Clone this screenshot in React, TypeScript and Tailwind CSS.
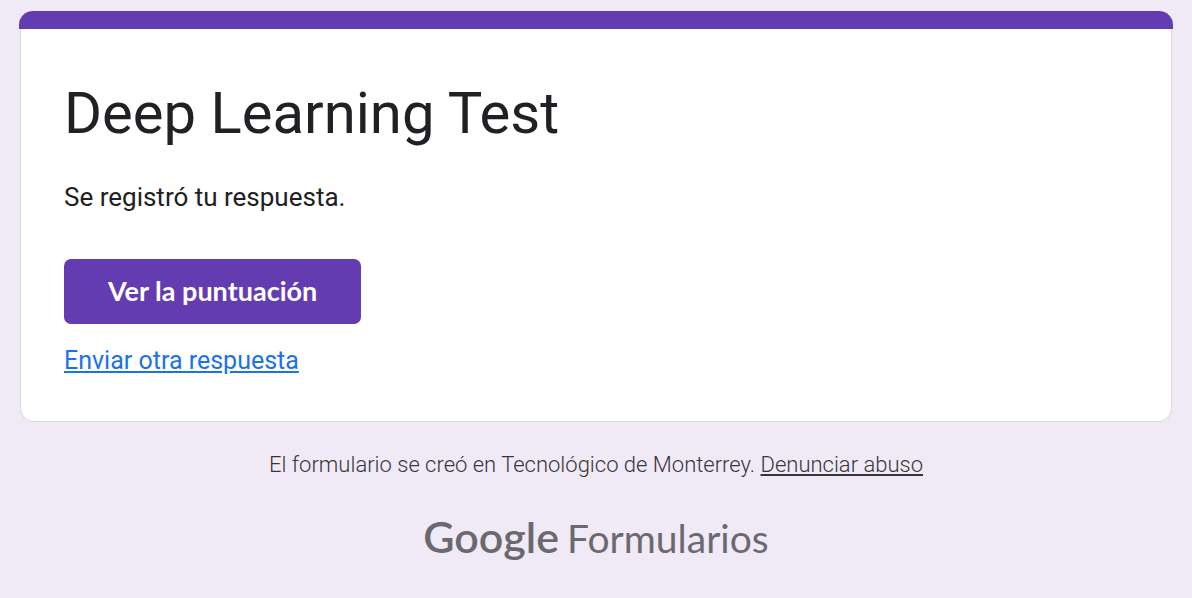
export default function App() {
  return (
    <div className="min-h-screen bg-[#f0eaf6] px-5 pt-[11px] font-['Roboto',sans-serif]">
      <main>
        <div className="-mx-px h-[18px] rounded-t-[14px] bg-[#643cb2]" />
        <section className="rounded-b-[14px] border border-t-0 border-[#dadce0] bg-white px-[43px] pt-12 pb-11">
          <h1 className="text-[58px] leading-[72px] text-[#202124]">Deep Learning Test</h1>
          <p className="mt-8 text-[26px] leading-8 text-[#202124]">Se registró tu respuesta.</p>
          <button type="button" className="mt-[46px] flex h-[65px] items-center rounded-[7px] bg-[#643cb2] px-11 font-['Lato',sans-serif] text-[27px] font-bold text-white">
            Ver la puntuación
          </button>
          <a href="#otra" className="mt-[21px] inline-block text-[25px] leading-8 text-[#1a73e8] underline">Enviar otra respuesta</a>
        </section>
      </main>
      <footer className="pt-[27px] text-center text-[22px] leading-8 text-[#38363b]">
        <p className="font-light">
          El formulario se creó en Tecnológico de Monterrey. <a href="#abuso" className="underline">Denunciar abuso</a>
        </p>
        <p className="mt-8 flex items-baseline justify-center gap-2 font-['Lato',sans-serif] text-[39px] leading-[48px] text-[#6b696f]">
          <span className="text-[43px] font-semibold">Google</span>
          <span>Formularios</span>
        </p>
      </footer>
    </div>
  );
}
